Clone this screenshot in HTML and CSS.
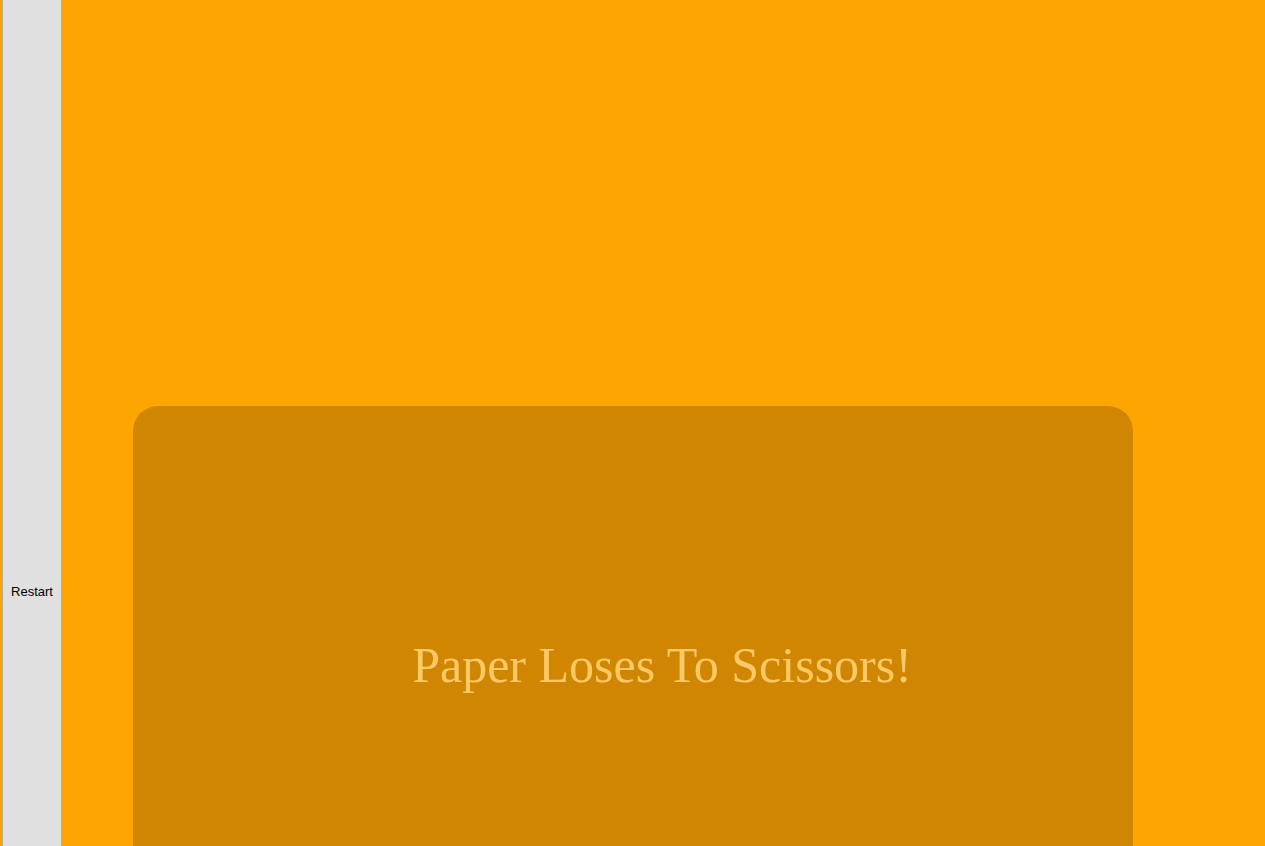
FILE: index.html
```html
<!DOCTYPE html>
<html>
<head>
<meta charset="utf-8">
<link rel="stylesheet" href="styles.css">
</head>
<body>
<div class="app">
  <button class="restart">Restart</button>
  <main class="main">
    <div class="card">
      <p class="result">Paper Loses To Scissors!</p>
    </div>
  </main>
</div>
</body>
</html>
```
FILE: styles.css
```css
html, body {
  margin: 0;
  padding: 0;
}
body {
  background: #FFA500;
  font-family: "Liberation Serif", "Times New Roman", serif;
}
.app {
  display: flex;
  align-items: stretch;
}
.restart {
  margin: 0 0 0 2px;
  width: 60px;
  padding: 2px 0 0 0;
  background: #E1E1E1;
  border: 1px solid #ADADAD;
  border-top: none;
  font-family: "Liberation Sans", Arial, sans-serif;
  font-size: 13px;
  color: #000;
}
.main {
  flex: 1;
  padding: 406px 0 254px 71px;
}
.card {
  width: 1000px;
  height: 522px;
  box-sizing: border-box;
  padding-left: 58px;
  padding-bottom: 5px;
  border-radius: 25px;
  background: rgba(0, 0, 0, 0.185);
  display: flex;
  align-items: center;
  justify-content: center;
}
.result {
  margin: 0;
  font-size: 50px;
  color: #FFC966;
}
```
